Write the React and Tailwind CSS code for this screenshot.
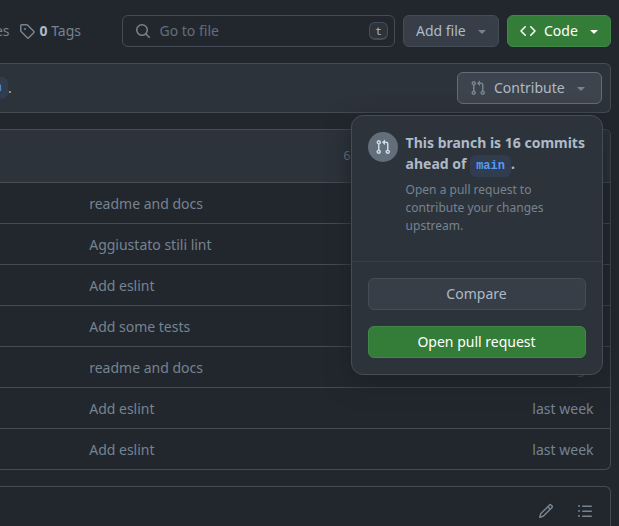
const paths = {
  pull: "M1.5 3.25a2.25 2.25 0 1 1 3 2.122v5.256a2.251 2.251 0 1 1-1.5 0V5.372A2.25 2.25 0 0 1 1.5 3.25Zm5.677-.177L9.573.677A.25.25 0 0 1 10 .854V2.5h1A2.5 2.5 0 0 1 13.5 5v5.628a2.251 2.251 0 1 1-1.5 0V5a1 1 0 0 0-1-1h-1v1.646a.25.25 0 0 1-.427.177L7.177 3.427a.25.25 0 0 1 0-.354ZM3.75 2.5a.75.75 0 1 0 0 1.5.75.75 0 0 0 0-1.5Zm0 9.5a.75.75 0 1 0 0 1.5.75.75 0 0 0 0-1.5Zm8.25.75a.75.75 0 1 0 1.5 0 .75.75 0 0 0-1.5 0Z",
  tag: "M1 7.775V2.75C1 1.784 1.784 1 2.75 1h5.025c.464 0 .91.184 1.238.513l6.25 6.25a1.75 1.75 0 0 1 0 2.474l-5.026 5.026a1.75 1.75 0 0 1-2.474 0l-6.25-6.25A1.752 1.752 0 0 1 1 7.775Zm1.5 0c0 .066.026.13.073.177l6.25 6.25a.25.25 0 0 0 .354 0l5.025-5.025a.25.25 0 0 0 0-.354l-6.25-6.25a.25.25 0 0 0-.177-.073H2.75a.25.25 0 0 0-.25.25ZM6 5a1 1 0 1 1 0 2 1 1 0 0 1 0-2Z",
  search: "M10.68 11.74a6 6 0 0 1-7.922-8.982 6 6 0 0 1 8.982 7.922l3.04 3.04a.749.749 0 0 1-.326 1.275.749.749 0 0 1-.734-.215ZM11.5 7a4.499 4.499 0 1 0-8.997 0A4.499 4.499 0 0 0 11.5 7Z",
  code: "m11.28 3.22 4.25 4.25a.75.75 0 0 1 0 1.06l-4.25 4.25a.749.749 0 0 1-1.275-.326.749.749 0 0 1 .215-.734L13.94 8l-3.72-3.72a.749.749 0 0 1 .326-1.275.749.749 0 0 1 .734.215Zm-6.56 0a.751.751 0 0 1 1.042.018.751.751 0 0 1 .018 1.042L2.06 8l3.72 3.72a.749.749 0 0 1-.326 1.275.749.749 0 0 1-.734-.215L.47 8.53a.75.75 0 0 1 0-1.06Z",
  down: "m4.427 7.427 3.396 3.396a.25.25 0 0 0 .354 0l3.396-3.396A.25.25 0 0 0 11.396 7H4.604a.25.25 0 0 0-.177.427Z",
  pencil: "M11.013 1.427a1.75 1.75 0 0 1 2.474 0l1.086 1.086a1.75 1.75 0 0 1 0 2.474l-8.61 8.61c-.21.21-.47.364-.756.445l-3.251.93a.75.75 0 0 1-.927-.928l.929-3.25c.081-.286.235-.547.445-.758l8.61-8.61Zm.176 4.823L9.75 4.81l-6.286 6.287a.253.253 0 0 0-.064.108l-.558 1.953 1.953-.558a.253.253 0 0 0 .108-.064Zm1.238-3.763a.25.25 0 0 0-.354 0L10.811 3.75l1.439 1.44 1.263-1.263a.25.25 0 0 0 0-.354Z",
  list: "M5.75 2.5h8.5a.75.75 0 0 1 0 1.5h-8.5a.75.75 0 0 1 0-1.5Zm0 5h8.5a.75.75 0 0 1 0 1.5h-8.5a.75.75 0 0 1 0-1.5Zm0 5h8.5a.75.75 0 0 1 0 1.5h-8.5a.75.75 0 0 1 0-1.5ZM2 14a1 1 0 1 1 0-2 1 1 0 0 1 0 2Zm1-6a1 1 0 1 1-2 0 1 1 0 0 1 2 0ZM2 4a1 1 0 1 1 0-2 1 1 0 0 1 0 2Z",
};

function Icon({ name, className = "" }) {
  return (
    <svg viewBox="0 0 16 16" width="16" height="16" fill="currentColor" className={`shrink-0 ${className}`}>
      <path d={paths[name]} />
    </svg>
  );
}

const commits = [
  { message: "readme and docs" },
  { message: "Aggiustato stili lint" },
  { message: "Add eslint" },
  { message: "Add some tests" },
  { message: "readme and docs", age: "ago" },
  { message: "Add eslint", age: "last week" },
  { message: "Add eslint", age: "last week" },
];

function Toolbar() {
  return (
    <div className="flex h-8 items-center">
      <div className="flex w-[122px] shrink-0 items-center text-[#768390]">
        <div className="flex w-[9.5px] justify-end pb-0.5 whitespace-nowrap">es</div>
        <Icon name="tag" className="ml-[9.5px]" />
        <span className="ml-[4.5px] pb-0.5 whitespace-nowrap">
          <b className="font-bold text-[#adbac7]">0</b> Tags
        </span>
      </div>
      <div className="flex h-8 w-[273px] shrink-0 items-center rounded-md border border-[#444c56] pr-1.5 pl-3 text-[#636e7b]">
        <Icon name="search" className="text-[#768390]" />
        <span className="ml-[8.5px] flex-1 pb-0.5">Go to file</span>
        <kbd className="flex h-[18px] w-[19px] items-center justify-center rounded-md border border-b-2 border-[#444c56] bg-[#2d333b] font-['Noto_Sans_Mono','DejaVu_Sans_Mono',monospace] text-[11px] leading-none text-[#adbac7]">t</kbd>
      </div>
      <button className="ml-2 flex h-8 w-24 shrink-0 items-center rounded-md border border-[#444c56] bg-[#373e47] pr-2 pl-3 text-[#adbac7]">
        <span className="flex-1 pb-0.5 text-left">Add file</span>
        <Icon name="down" className="text-[#768390]" />
      </button>
      <button className="ml-2 flex h-8 w-[104px] shrink-0 items-center rounded-md border border-[#43864a] bg-[#347d39] pr-2 pl-3 text-white">
        <Icon name="code" />
        <span className="ml-2 flex-1 pb-0.5 text-left">Code</span>
        <Icon name="down" />
      </button>
    </div>
  );
}

function ContributePopover() {
  return (
    <div className="absolute top-[51px] right-[7px] z-10 h-[260px] w-[252px] rounded-xl border border-[#444c56] bg-[#2d333b] shadow-[0_8px_24px_#1c2128]">
      <div className="flex h-[146px] border-b border-[#373e47] pt-4 pl-4">
        <div className="flex h-[30px] w-[30px] shrink-0 items-center justify-center rounded-full bg-[#636e7b] text-[#cdd9e5]">
          <Icon name="pull" />
        </div>
        <div className="ml-[7.6px] w-[190px]">
          <h3 className="leading-[21px] font-bold text-[#adbac7]">
            This branch is 16 commits ahead of{" "}
            <code className="rounded-md bg-[#313c4f] px-1.5 py-1 font-['Liberation_Mono',monospace] text-xs">
              <span className="text-[#539bf5]">main</span>
            </code>
            .
          </h3>
          <p className="mt-[7px] w-[150px] text-xs leading-[18px] text-[#768390]">Open a pull request to contribute your changes upstream.</p>
        </div>
      </div>
      <div className="flex flex-col gap-4 p-4">
        <button className="h-8 rounded-md border border-[#444c56] bg-[#373e47] pr-px pb-0.5 text-[#adbac7]">Compare</button>
        <button className="h-8 rounded-md border border-[#43864a] bg-[#347d39] pr-px pb-0.5 text-white">Open pull request</button>
      </div>
    </div>
  );
}

export default function App() {
  return (
    <div className="h-[526px] w-[619px] overflow-hidden bg-[#22272e] pt-[15px] pr-2 font-['Noto_Sans',sans-serif] text-sm leading-[21px]">
      <Toolbar />
      <div className="relative mt-4 flex h-[50px] items-center rounded-r-md border border-l-0 border-[#444c56] bg-[#2d333b] pr-2 text-[#adbac7]">
        <div className="flex w-2 justify-end rounded-r-md bg-[#313c4f] py-0.5 pr-1.5 font-['Liberation_Mono',monospace] text-xs leading-[18px] text-[#539bf5]">n</div>
        <span className="flex-1 pb-0.5">.</span>
        <button className="flex h-8 w-[145px] items-center rounded-md border border-[#636e7b] bg-[#3d444d] pr-3 pl-3">
          <Icon name="pull" className="text-[#768390]" />
          <span className="ml-2 flex-1 pb-0.5 text-left">Contribute</span>
          <Icon name="down" className="text-[#768390]" />
        </button>
        <ContributePopover />
      </div>
      <div className="mt-4 h-[341px] overflow-hidden rounded-r-md border border-l-0 border-[#444c56] text-[#768390]">
        <div className="flex h-[52px] items-center bg-[#2d333b] pl-[343.5px] text-xs">6</div>
        {commits.map(({ message, age }, i) => (
          <div key={i} className="flex h-[41px] items-center justify-between border-t border-[#444c56] pr-[16.5px] pl-[89.2px]">
            <span>{message}</span>
            <span>{age}</span>
          </div>
        ))}
      </div>
      <div className="mt-4 flex h-[60px] items-start justify-end gap-[23px] rounded-tr-md border border-b-0 border-l-0 border-[#444c56] pt-4 pr-[17px] text-[#768390]">
        <Icon name="pencil" />
        <Icon name="list" />
      </div>
    </div>
  );
}
